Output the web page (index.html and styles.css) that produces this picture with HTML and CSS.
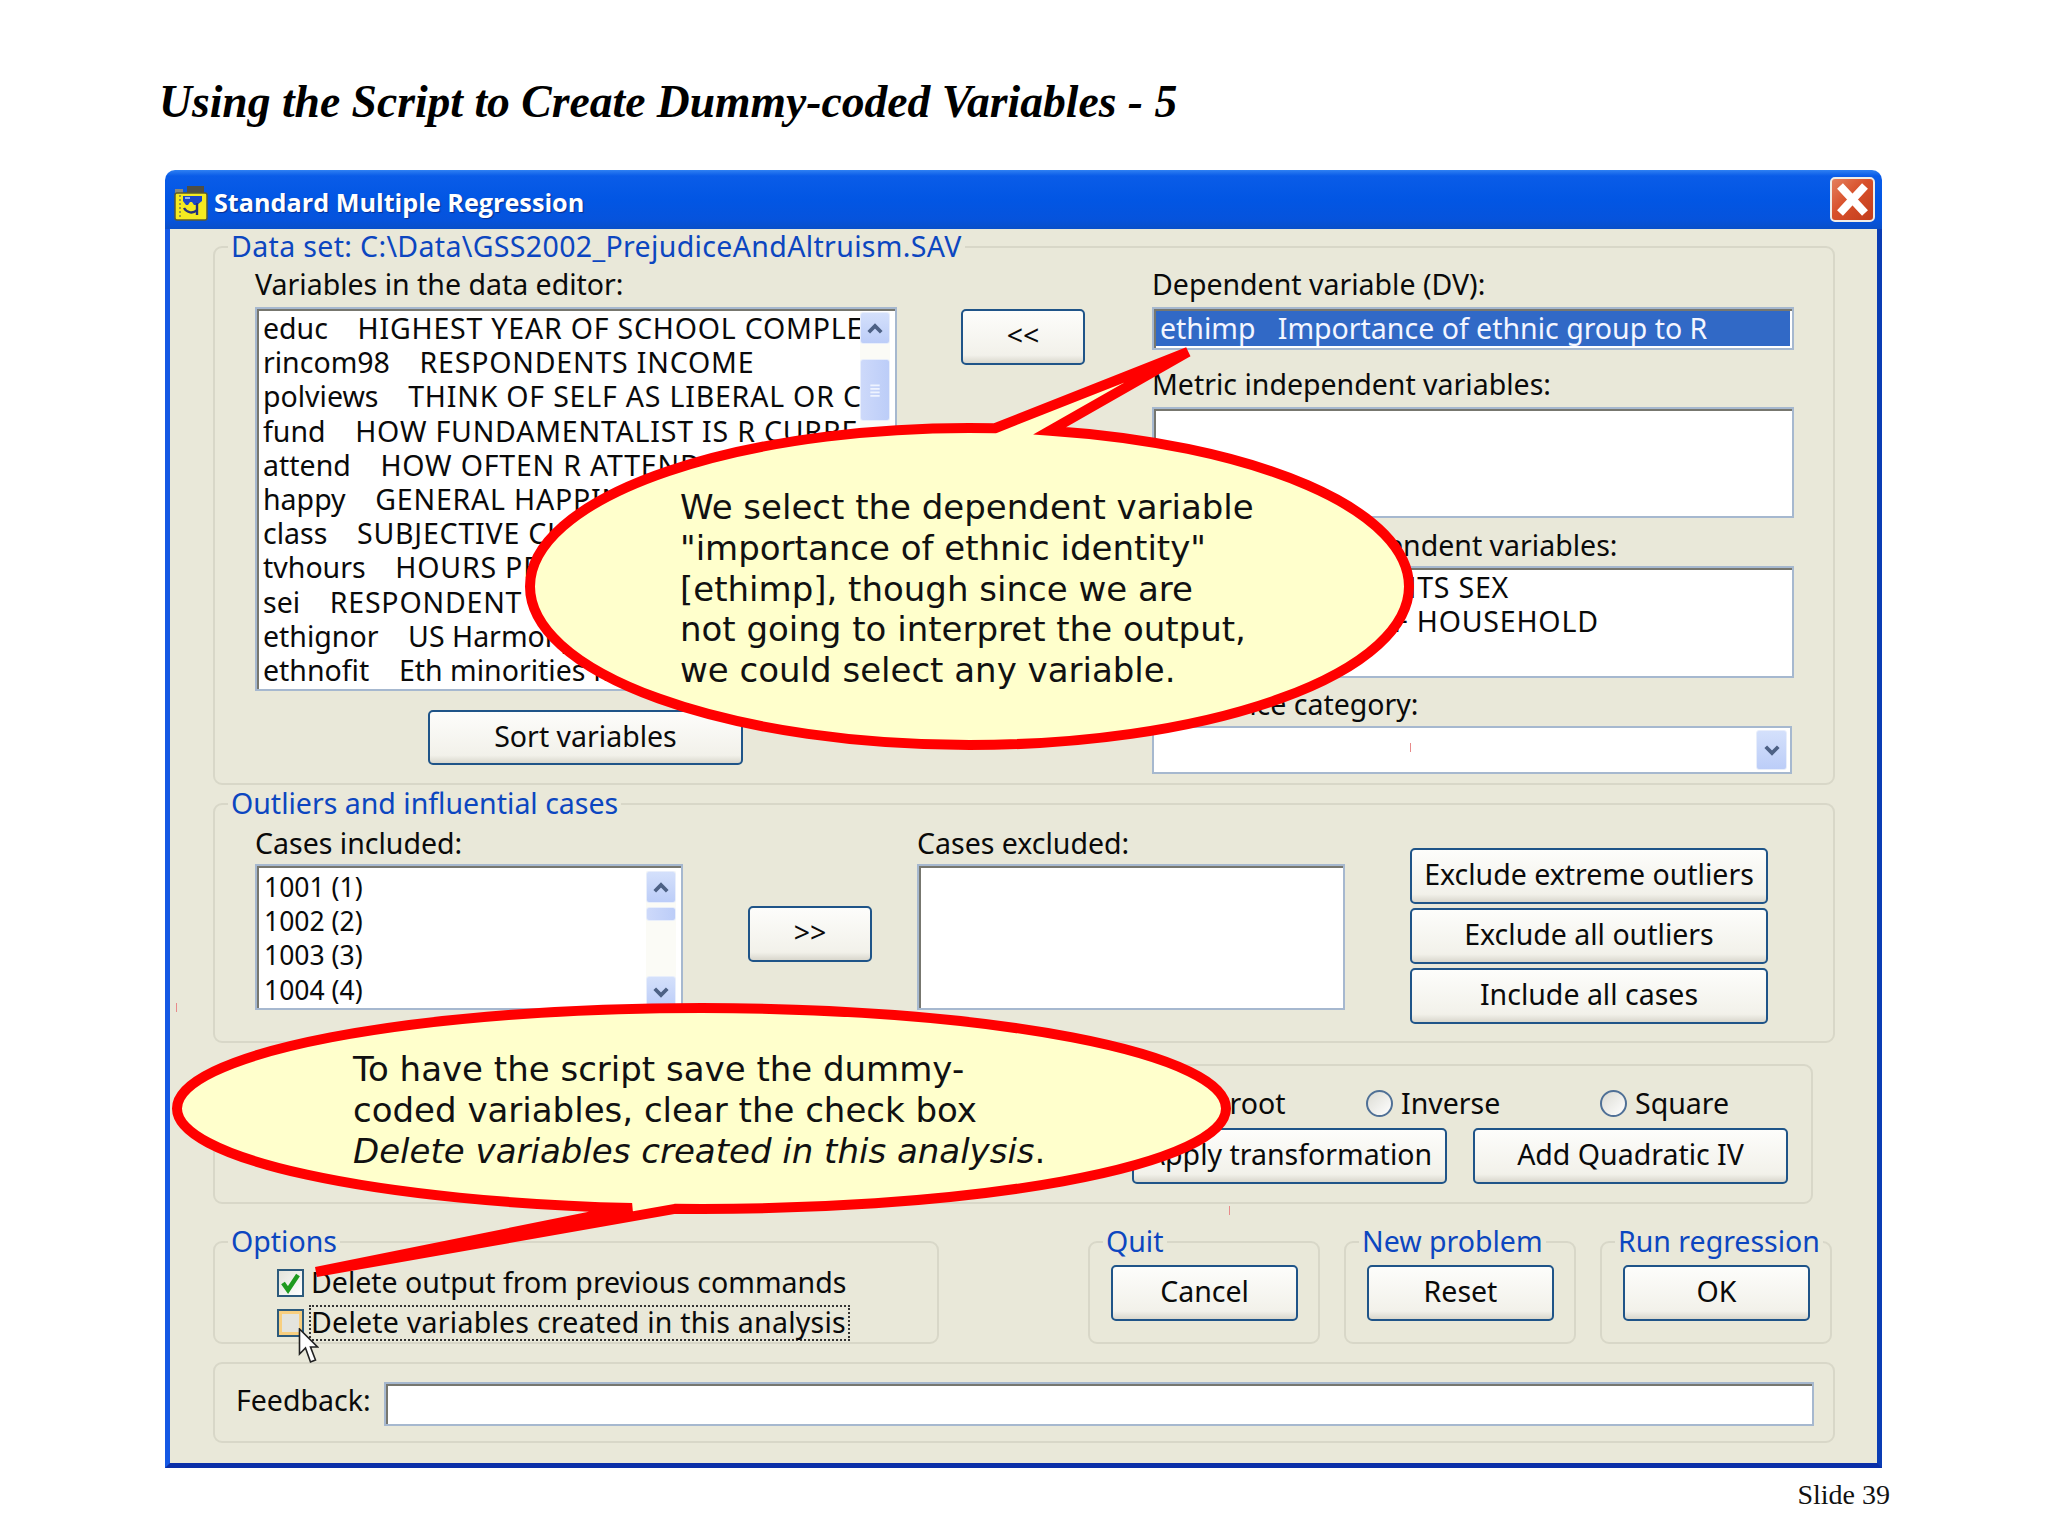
FILE: index.html
```html
<!DOCTYPE html>
<html lang="en">
<head>
<meta charset="utf-8">
<title>Slide 39</title>
<link rel="stylesheet" href="styles.css">
</head>
<body>
<main class="slide">
  <h1 class="slide-title">Using the Script to Create Dummy-coded Variables - 5</h1>

  <section class="window">
    <header class="titlebar">
      <svg class="app-icon" viewBox="0 0 34 36" aria-hidden="true">
        <path d="M1 4h8v5H1z" fill="#8a8a78"/>
        <path d="M13 1h17v8H13z" fill="#4e4e44"/>
        <rect x="1" y="8" width="32" height="27" rx="2" fill="#f4ea20" stroke="#5a5a30" stroke-width="1.5"/>
        <path d="M6 10v23" stroke="#9a9a40" stroke-width="2" stroke-dasharray="2 2"/>
        <path d="M9 11h19v5l-5 4h-3l-2-3h-2l-2 3h-2l-3-4z" fill="#1a46c8"/>
        <path d="M11 12h5v2h-5z" fill="#8fb0f0"/>
        <path d="M10 23c3 5 9 6 13 2M23 18v12" stroke="#23307a" stroke-width="2.4" fill="none"/>
      </svg>
      <span class="window-title">Standard Multiple Regression</span>
      <button class="close" type="button" aria-label="Close">
        <svg viewBox="0 0 41 41"><path d="M8 7 L33 34 M33 7 L8 34" stroke="#fff" stroke-width="8" fill="none"/></svg>
      </button>
    </header>

    <div class="client">
      <fieldset class="group">
        <legend class="legend legend-wide">Data set: C:\Data\GSS2002_PrejudiceAndAltruism.SAV</legend>
        <div class="data-row">
          <div class="col-vars">
            <div class="label">Variables in the data editor:</div>
            <div class="listbox listbox-vars">
              <div class="rows">
                <div class="row">educ    <span class="caps">HIGHEST YEAR OF SCHOOL COMPLETED</span></div>
                <div class="row">rincom98    <span class="caps">RESPONDENTS INCOME</span></div>
                <div class="row">polviews    <span class="caps">THINK OF SELF AS LIBERAL OR CONSERVATIVE</span></div>
                <div class="row">fund    <span class="caps">HOW FUNDAMENTALIST IS R CURRENTLY</span></div>
                <div class="row">attend    <span class="caps">HOW OFTEN R ATTENDS RELIGIOUS SERVICES</span></div>
                <div class="row">happy    <span class="caps">GENERAL HAPPINESS</span></div>
                <div class="row">class    <span class="caps">SUBJECTIVE CLASS IDENTIFICATION</span></div>
                <div class="row">tvhours    <span class="caps">HOURS PER DAY WATCHING TV</span></div>
                <div class="row">sei    <span class="caps">RESPONDENT SOCIOECONOMIC INDEX</span></div>
                <div class="row">ethignor    US Harmony Ignored Ethnic Differences</div>
                <div class="row">ethnofit    Eth minorities fit in</div>
              </div>
              <div class="scrollbar">
                <span class="sb-btn"><svg viewBox="0 0 16 12"><path d="M3 9l5-5 5 5" class="chev"/></svg></span>
                <span class="sb-thumb sb-thumb-tall"><svg viewBox="0 0 10 12"><path d="M1 2h8M1 5h8M1 8h8M1 11h8" class="grip"/></svg></span>
                <span class="sb-fill"></span>
              </div>
            </div>
            <button class="btn btn-sort" type="button">Sort variables</button>
          </div>

          <div class="col-move">
            <button class="btn btn-move" type="button">&lt;&lt;</button>
          </div>

          <div class="col-targets">
            <div class="label">Dependent variable (DV):</div>
            <div class="field field-dv"><span class="selected">ethimp   Importance of ethnic group to R</span></div>
            <div class="label label-metric">Metric independent variables:</div>
            <div class="field field-tall"></div>
            <div class="label label-next label-nonmetric">Non-metric independent variables:</div>
            <div class="field field-nonmetric field-list">
              <div class="row">sex     <span class="caps">RESPONDENTS SEX</span></div>
              <div class="row">hhrace     <span class="caps">RACE OF HOUSEHOLD</span></div>
            </div>
            <div class="label label-next">Reference category:</div>
            <div class="combo">
              <span class="sb-btn combo-btn"><svg viewBox="0 0 16 12"><path d="M3 3l5 5 5-5" class="chev"/></svg></span>
            </div>
          </div>
        </div>
      </fieldset>

      <fieldset class="group group-cases">
        <legend class="legend">Outliers and influential cases</legend>
        <div class="cases-row">
          <div class="col-cases">
            <div class="label">Cases included:</div>
            <div class="listbox listbox-cases">
              <div class="rows rows-cases">
                <div class="row">1001 (1)</div>
                <div class="row">1002 (2)</div>
                <div class="row">1003 (3)</div>
                <div class="row">1004 (4)</div>
              </div>
              <div class="scrollbar">
                <span class="sb-btn"><svg viewBox="0 0 16 12"><path d="M3 9l5-5 5 5" class="chev"/></svg></span>
                <span class="sb-thumb"></span>
                <span class="sb-fill"></span>
                <span class="sb-btn"><svg viewBox="0 0 16 12"><path d="M3 3l5 5 5-5" class="chev"/></svg></span>
              </div>
            </div>
          </div>
          <div class="col-move-right">
            <button class="btn btn-move" type="button">&gt;&gt;</button>
          </div>
          <div class="col-cases">
            <div class="label">Cases excluded:</div>
            <div class="field field-excluded"></div>
          </div>
          <div class="col-outlier-btns">
            <button class="btn btn-outlier" type="button">Exclude extreme outliers</button>
            <button class="btn btn-outlier" type="button">Exclude all outliers</button>
            <button class="btn btn-outlier" type="button">Include all cases</button>
          </div>
        </div>
      </fieldset>

      <div class="group group-transform">
        <div class="radio-row">
          <label class="radio radio-root"><i class="radio-dot"></i>Square root</label>
          <label class="radio radio-inverse"><i class="radio-dot"></i>Inverse</label>
          <label class="radio"><i class="radio-dot"></i>Square</label>
        </div>
        <div class="transform-btns">
          <button class="btn btn-transform" type="button">Apply transformation</button>
          <button class="btn btn-transform" type="button">Add Quadratic IV</button>
        </div>
      </div>

      <div class="bottom-row">
        <fieldset class="group group-options">
          <legend class="legend">Options</legend>
          <div class="options-body">
            <div class="check-row">
              <span class="check"><svg viewBox="0 0 23 24"><path d="M4 12l5 7L19 4" stroke="#1f9a1f" stroke-width="4.5" fill="none"/></svg></span>
              <span class="check-label">Delete output from previous commands</span>
            </div>
            <div class="check-row">
              <span class="check check-hover"></span>
              <span class="check-label check-focus">Delete variables created in this analysis</span>
            </div>
          </div>
        </fieldset>
        <fieldset class="group group-action">
          <legend class="legend">Quit</legend>
          <div class="action-body"><button class="btn btn-action" type="button">Cancel</button></div>
        </fieldset>
        <fieldset class="group group-action">
          <legend class="legend">New problem</legend>
          <div class="action-body"><button class="btn btn-action" type="button">Reset</button></div>
        </fieldset>
        <fieldset class="group group-action">
          <legend class="legend">Run regression</legend>
          <div class="action-body"><button class="btn btn-action" type="button">OK</button></div>
        </fieldset>
      </div>

      <div class="group group-feedback">
        <div class="feedback-label">Feedback:</div>
        <div class="field field-feedback"></div>
      </div>
    </div>
  </section>

  <div class="slide-number">Slide 39</div>

  <svg class="cursor" viewBox="0 0 20 36" aria-hidden="true">
    <path d="M1 1 L1 26 L7 20 L12 34 L17 32 L12 19 L19 19 Z" fill="#fff" stroke="#222" stroke-width="1.6"/>
  </svg>

  <i class="speck speck-a"></i>
  <i class="speck speck-b"></i>
  <i class="speck speck-c"></i>

  <aside class="callout">
    <svg class="callout-shape" viewBox="0 0 2048 1536" aria-hidden="true">
      <path class="bubble" d="M995 428.27 L1188 352 L1050 430.68 A439.5 158.5 0 0 1 1409 586.5 A439.5 158.5 0 0 1 969.5 745 A439.5 158.5 0 0 1 530 586.5 A439.5 158.5 0 0 1 995 428.27 Z"/>
    </svg>
    <p class="callout-text callout-text-a">We select the dependent variable<br>"importance of ethnic identity"<br>[ethimp], though since we are<br>not going to interpret the output,<br>we could select any variable.</p>
  </aside>
  <aside class="callout">
    <svg class="callout-shape" viewBox="0 0 2048 1536" aria-hidden="true">
      <path class="bubble" d="M675 1208.87 L316 1272 L632 1208.11 A524.5 100.5 0 0 1 177 1108.5 A524.5 100.5 0 0 1 701.5 1008 A524.5 100.5 0 0 1 1226 1108.5 A524.5 100.5 0 0 1 675 1208.87 Z"/>
    </svg>
    <p class="callout-text callout-text-b">To have the script save the dummy-<br>coded variables, clear the check box<br><em>Delete variables created in this analysis</em>.</p>
  </aside>
</main>
</body>
</html>
```
FILE: styles.css
```css
* { box-sizing: border-box; }
html, body { margin: 0; padding: 0; background: #fff; }
body { width: 2048px; height: 1536px; overflow: hidden; }

.slide {
  position: relative;
  width: 2048px;
  height: 1536px;
  padding: 75px 158px 0 159px;
  font-family: "Noto Sans", "Liberation Sans", sans-serif;
  font-size: 28.5px;
  color: #0a0a0a;
}

.slide-title {
  margin: 0 0 41px;
  height: 54px;
  font: italic bold 45.6px/54px "Liberation Serif", serif;
  color: #000;
  white-space: nowrap;
}

.slide-number {
  margin-top: 11px;
  text-align: right;
  font: 28px/32px "Liberation Serif", serif;
  color: #111;
}

/* Window */
.window { width: 1717px; margin-left: 6px; }

.titlebar {
  display: flex;
  align-items: center;
  height: 59px;
  padding: 0 7px 0 9px;
  border-radius: 10px 10px 0 0;
  background: linear-gradient(#2f80f2 0, #0a5ce8 10%, #0256e4 50%, #0653dc 85%, #0a4fc8 100%);
}
.app-icon { width: 34px; height: 36px; margin-top: 7px; flex: none; }
.window-title {
  flex: 1;
  margin-left: 6px;
  margin-top: 4px;
  font: bold 25.2px/34px "Open Sans", sans-serif;
  color: #fff;
  text-shadow: 1px 1px 1px #0a2f90;
}
.close {
  width: 45px;
  height: 45px;
  padding: 0;
  border: 2px solid #f0ece6;
  border-radius: 5px;
  background: linear-gradient(135deg, #e4805e, #d8502a 45%, #c23c1c);
}
.close svg { display: block; width: 41px; height: 41px; }

.client {
  padding: 1px 40px 20px 43px;
  border-left: 5px solid #1458e4;
  border-right: 5px solid #0a3cb4;
  border-bottom: 5px solid #0a2fa8;
  background: #e9e8d9;
}

/* Groups */
.group {
  margin: 0;
  padding: 0;
  min-width: 0;
  width: 1622px;
  border: 2px solid #d8d7c8;
  border-radius: 9px;
}
.legend {
  margin-left: 13px;
  padding: 0 3px 2px;
  line-height: 32px;
  color: #0c46c0;
  white-space: nowrap;
}
.legend-wide { letter-spacing: 0.35px; }
.label { height: 34px; line-height: 32px; white-space: nowrap; }

/* First group */
.data-row { display: flex; padding: 4px 0 9px 40px; }
.col-vars { width: 642px; }
.col-move { width: 124px; margin-left: 64px; padding-top: 41px; }
.col-targets { width: 642px; margin-left: 67px; }
.label-metric { margin-top: 18px; margin-bottom: 5px; }
.label-next { margin-top: 10px; margin-bottom: 4px; }
.label-nonmetric { margin-top: 11px; margin-bottom: 3px; }
.col-targets > .label:first-child { margin-bottom: 5px; }
.col-vars > .label { margin-bottom: 5px; }

.listbox {
  display: flex;
  overflow: hidden;
  background: #fff;
  border: 2px solid #a6b8cf;
  box-shadow: inset 2px 2px 0 #77776f;
}
.listbox-vars { height: 384px; padding: 2px 5px 0 6px; }
.listbox-cases { height: 146px; padding: 4px 5px 0 7px; }
.rows { flex: 1; min-width: 0; overflow: hidden; }
.rows-cases { font-size: 26.5px; }
.row { height: 34.2px; line-height: 34.2px; white-space: pre; }
.caps { letter-spacing: 0.8px; }

.scrollbar { display: flex; flex-direction: column; flex: none; width: 30px; background: #fbfbf6; margin-top: 1px; }
.sb-btn {
  display: flex;
  align-items: center;
  justify-content: center;
  flex: none;
  height: 32px;
  border: 1px solid #e8eefb;
  border-radius: 3px;
  background: linear-gradient(#d4e0fb, #bccdf8);
}
.sb-btn svg { width: 20px; height: 15px; }
.chev { fill: none; stroke: #4d6185; stroke-width: 3; }
.sb-thumb {
  display: flex;
  align-items: center;
  justify-content: center;
  flex: none;
  height: 14px;
  margin-top: 4px;
  border: 1px solid #e8eefb;
  border-radius: 3px;
  background: linear-gradient(90deg, #cdd9fa, #bccdf8);
}
.sb-thumb-tall { height: 62px; margin-top: 15px; }
.sb-thumb svg { width: 12px; height: 14px; }
.grip { stroke: #eef3ff; stroke-width: 1.4; }
.sb-fill { flex: 1; }

.btn {
  display: block;
  padding: 0 0 3px;
  border: 2px solid #1f5488;
  border-radius: 5px;
  background: linear-gradient(#fdfdfb, #f2f1ea 85%, #d9d7cd);
  font: inherit;
  color: #0a0a0a;
  line-height: 1;
}
.btn-sort { width: 315px; height: 55px; margin: 19px 0 0 173px; }
.btn-move { width: 124px; height: 56px; }

.field {
  background: #fff;
  border: 2px solid #a6b8cf;
  box-shadow: inset 2px 2px 0 #77776f;
}
.field-dv { height: 43px; padding: 2px; }
.selected {
  display: block;
  height: 100%;
  padding-left: 4px;
  line-height: 34px;
  background: #3169c6;
  color: #f4f6ff;
  white-space: pre;
}
.field-tall { height: 111px; }
.field-nonmetric { height: 112px; }
.field-list { padding: 2px 0 0 6px; }
.combo {
  display: flex;
  justify-content: flex-end;
  align-items: center;
  width: 640px;
  height: 48px;
  padding-right: 3px;
  background: #fff;
  border: 2px solid #a6b8cf;
}
.combo-btn { width: 31px; height: 40px; }

/* Cases group */
.group-cases { margin-top: 2px; }
.cases-row { display: flex; padding: 6px 0 17px 40px; }
.col-cases { width: 428px; }
.col-cases > .label { margin-bottom: 3px; }
.col-move-right { width: 123px; margin-left: 65px; padding-top: 79px; }
.col-cases + .col-move-right + .col-cases { margin-left: 46px; }
.field-excluded { height: 146px; }
.col-outlier-btns { display: flex; flex-direction: column; gap: 4px; width: 358px; margin-left: 65px; padding-top: 21px; }
.btn-outlier { width: 358px; height: 56px; }

/* Transform group */
.group-transform { width: 1600px; margin-top: 21px; padding: 20px 0 18px; }
.radio-row { display: flex; height: 34px; padding-left: 878px; }
.radio { display: flex; align-items: center; white-space: nowrap; }
.radio-root { width: 273px; }
.radio-inverse { width: 234px; }
.radio-dot {
  flex: none;
  width: 27px;
  height: 27px;
  margin-right: 8px;
  border: 2px solid #4f7096;
  border-radius: 50%;
  background: linear-gradient(135deg, #dcdcd4, #fff);
}
.transform-btns { display: flex; gap: 26px; margin-top: 8px; padding-left: 917px; }
.btn-transform { width: 315px; height: 56px; }

/* Bottom row */
.bottom-row { display: flex; margin-top: 21px; }
.group-options { width: 726px; margin-right: 149px; }
.options-body { padding: 6px 0 1px 62px; }
.group-action { width: 232px; margin-right: 24px; }
.group-action:last-child { margin-right: 0; }
.action-body { padding: 6px 0 21px 21px; }
.btn-action { width: 187px; height: 56px; }
.check-row { display: flex; align-items: center; height: 36px; margin-bottom: 4px; }
.check-row:last-child { margin-bottom: 0; }
.check {
  flex: none;
  width: 27px;
  height: 28px;
  margin-right: 5px;
  border: 2px solid #2c5a7c;
  background: linear-gradient(135deg, #e3e3da, #fff);
}
.check svg { display: block; width: 100%; height: 100%; }
.check-hover { box-shadow: inset 0 0 0 3px #f8cf80; background: #e4e4de; }
.check-label { height: 36px; padding: 0 2px 0 0; line-height: 30px; border: 2px solid transparent; white-space: nowrap; }
.check-focus { border: 2px dotted #333; background: #e9e8d9; letter-spacing: 0.25px; }

/* Feedback */
.group-feedback { display: flex; margin-top: 18px; padding: 18px 19px 15px 21px; }
.feedback-label { width: 148px; line-height: 36px; }
.field-feedback { flex: 1; height: 44px; }

/* Overlays */
.cursor { position: absolute; left: 298px; top: 1328px; width: 21px; height: 36px; }
.speck { position: absolute; width: 1px; height: 9px; background: #e88a8a; }
.speck-a { left: 1410px; top: 743px; z-index: 3; }
.speck-b { left: 176px; top: 1003px; }
.speck-c { left: 1229px; top: 1206px; }

.callout-shape { position: absolute; left: 0; top: 0; width: 2048px; height: 1536px; pointer-events: none; }
.bubble { fill: #ffffcc; stroke: #ff0000; stroke-width: 10; stroke-linejoin: miter; }
.callout-text {
  position: absolute;
  margin: 0;
  font: 34px/40.8px "DejaVu Sans", sans-serif;
  color: #111;
  white-space: nowrap;
}
.callout-text-a { left: 680px; top: 487px; }
.callout-text-b { left: 353px; top: 1049px; }
```
